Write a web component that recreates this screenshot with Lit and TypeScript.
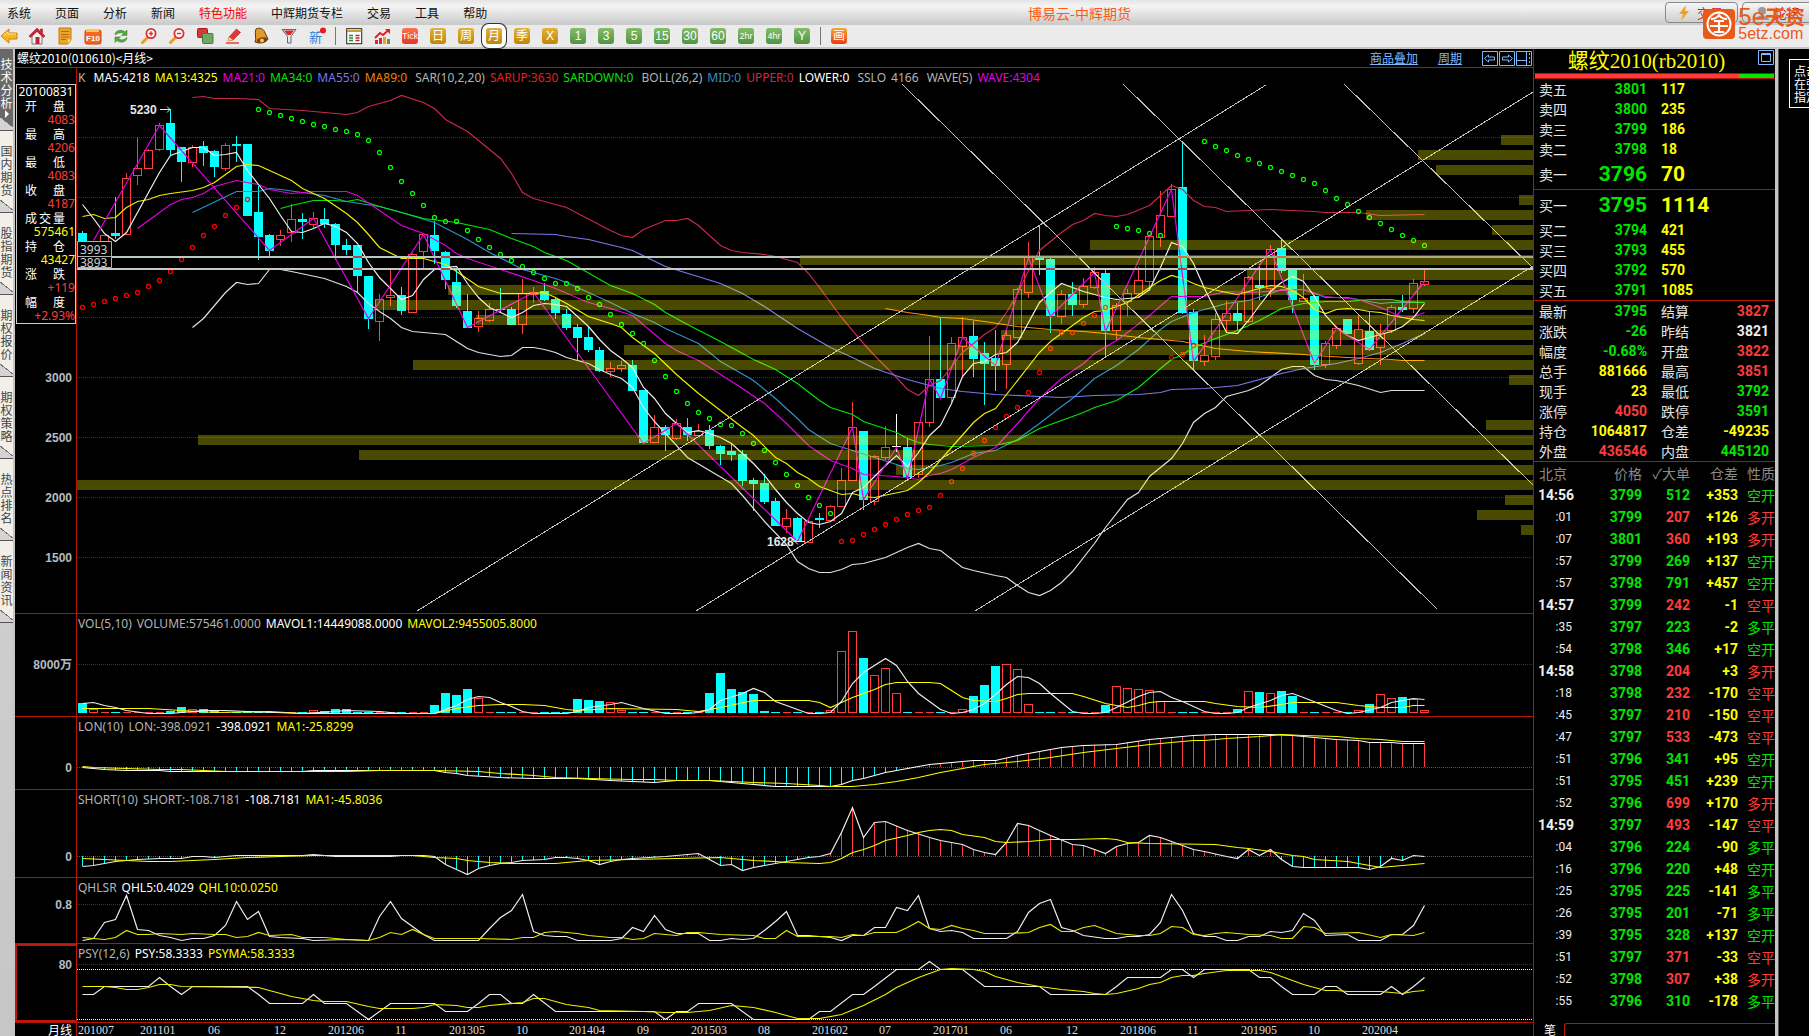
import { LitElement, html, svg, css, nothing, TemplateResult } from "lit";
import { customElement, state } from "lit/decorators.js";

/* ---------- chart data: month index, then canvas rows ---------- */

const STEP = 11;
const LEFT = 77;
const cx = (i: number) => 82 + STEP * i;

// high, low, body top, body bottom, kind (d = down, u = up, w = flat)
const CANDLES = `231,245,233,245,d 245,270,247,262,u 235,250,235,250,u 197,239,233,236,d 173,235,178,234,u 137,185,168,175,u
149,169,150,168,u 123,151,125,149,u 109,155,123,150,d 147,182,147,162,d 145,167,147,162,u 141,166,146,153,d 150,177,151,167,d
143,171,145,168,u 136,162,144,146,d 144,216,144,216,d 186,260,212,237,d 234,257,235,251,d 230,246,235,239,u 204,242,219,232,u
213,239,219,222,d 212,228,218,224,u 208,228,219,224,d 223,260,224,245,d 239,255,245,250,d 245,293,245,276,d 276,329,276,319,d
294,341,299,321,u 270,306,295,297,u 287,315,295,311,d 253,312,254,312,u 233,268,234,251,u 221,264,235,251,d 251,289,252,280,d
270,308,282,306,d 294,328,311,328,d 311,332,318,326,u 303,322,309,320,u 288,312,309,310,d 307,325,309,325,d 279,334,293,324,u
287,303,292,294,u 283,301,291,300,d 297,319,299,313,d 309,330,314,328,d 324,361,327,338,d 326,352,337,350,d 347,372,350,371,d
362,377,368,371,u 361,372,365,368,u 360,391,365,391,d 390,444,390,443,d 415,443,427,442,u 425,451,427,435,d 419,440,423,438,u
418,441,427,435,d 424,436,431,435,u 425,449,430,446,d 445,465,446,454,d 443,461,451,455,d 450,486,454,481,d 478,511,480,484,d
474,504,483,502,d 498,526,501,526,d 509,533,518,526,u 517,541,518,542,d 520,542,521,542,u 513,528,518,520,d 505,521,506,520,u
468,507,480,506,u 402,481,427,480,u 431,510,431,500,d 455,505,456,501,u 426,460,447,457,u 414,452,446,447,w 438,481,447,477,d
422,478,422,474,u 336,427,379,422,u 318,399,379,398,d 337,402,343,397,u 317,377,337,346,u 321,377,336,359,d 342,405,353,364,d
330,391,358,366,d 332,389,335,364,u 288,338,289,337,u 242,298,257,292,u 225,275,258,260,d 257,333,259,316,d 290,324,294,316,u
282,316,294,305,d 278,308,286,304,u 267,289,272,287,u 269,357,273,331,d 303,340,305,330,u 289,316,293,301,u 267,298,280,293,u
235,291,236,281,u 191,247,215,237,u 184,217,189,216,u 141,314,187,313,d 309,371,312,361,d 335,366,355,361,u 313,360,319,356,u
301,332,313,320,u 303,331,313,321,d 276,323,277,321,u 264,300,285,288,d 245,297,249,288,u 238,273,248,271,d 268,313,270,300,d
274,301,298,301,u 295,370,296,365,d 341,368,343,364,u 326,349,328,345,u 319,334,319,334,d 314,365,329,363,u 311,351,331,350,d
324,365,333,347,u 305,333,307,330,u 295,312,307,310,d 279,313,283,308,u 270,286,281,284,u`
  .split(/\s+/)
  .map((c) => {
    const [h, l, t, b, k] = c.split(",");
    return { h: +h, l: +l, t: +t, b: +b, k };
  });

type Pt = [number, number];
const pts = (s: string): Pt[] =>
  s.trim().split(/\s+/).map((p) => p.split(":").map(Number) as Pt);
const seq = (start: number, s: string): Pt[] =>
  s.trim().split(/[\s,]+/).map((v, k) => [start + k, +v] as Pt);

const MA5 = seq(0, `204,218,233,241,232,212,192,172,155,151,147,147,155,154,152,170,184,198,215,231,232,228,223,226,232,243,262,277,288,299,295,279,269,267,266,283,297,307,312,317,312,305,303,304,306,316,326,339,350,358,367,387,398,413,423,432,430,433,437,443,453,463,475,489,502,513,522,524,521,513,492,487,476,465,455,466,452,435,425,403,376,363,361,354,352,342,322,302,292,283,287,291,294,297,299,298,297,289,267,242,246,263,288,310,332,333,320,305,291,282,276,281,296,315,327,335,340,337,334,331,326,317,303`);
const MA13 = pts(`0:216 1:214 2:218 3:217 4:207 5:201 6:199 7:195 8:193 10:190 11:187 12:182 13:174 14:166 15:164 16:165 17:170 19:180 20:188 22:198 24:213 25:222 26:234 27:247 29:258 31:258 33:264 34:271 36:286 38:293 41:293 42:292 43:297 44:303 46:316 48:323 49:327 50:337 52:353 54:374 56:393 58:410 60:427 61:435 63:457 64:463 65:472 66:478 67:486 68:490 69:494 70:493 71:496 72:497 75:490 76:482 77:472 79:447 81:422 82:413 83:408 84:394 86:366 87:352 88:341 90:325 91:317 92:311 93:310 95:302 97:287 98:280 99:275 100:278 101:283 102:287 104:292 105:294 106:291 108:285 109:286 110:290 111:297 112:309 113:313 114:309 115:308 116:309 117:311 118:312 119:315 120:317 121:319 122:320`);
const MA21 = pts(`5:228 8:204 9:199 10:197 11:193 12:186 14:180 16:184 17:189 19:193 21:191 24:191 25:195 29:225 31:233 33:245 34:253 35:258 38:269 41:280 43:288 46:302 48:308 50:315 53:343 54:350 56:360 58:374 60:388 62:403 64:423 66:445 68:460 70:468 71:474 74:476 76:479 77:475 78:473 79:469 81:457 83:447 85:423 87:398 89:378 91:363 92:353 94:340 95:332 97:315 99:296 102:296 104:291 106:292 109:290 111:289 113:296 116:299 118:307 119:312 120:317 121:316 122:312`);
const MID = pts(`10:212 14:191 16:191 17:188 18:189 22:195 24:201 27:206 29:212 32:222 35:239 37:252 39:263 40:269 43:278 44:282 46:292 48:302 50:313 52:322 53:328 55:338 56:343 58:361 61:380 63:398 65:418 66:429 68:443 70:450 72:457 74:464 75:468 76:469 78:465 79:462 81:453 83:450 85:439 87:423 89:406 90:398 92:378 94:365 96:349 98:329 99:321 101:312 104:303 106:300 108:293 109:289 111:289 113:297 115:297 117:301 118:303 119:302 122:302`);
const MA34 = pts(`18:208 19:205 21:200 23:200 24:201 25:199 27:206 30:215 31:218 34:222 37:229 39:238 41:246 42:252 44:260 48:285 50:293 52:304 53:312 55:324 58:341 59:347 61:359 63:369 65:383 67:400 68:407 70:414 71:421 74:432 75:438 76:442 77:444 79:446 83:445 85:440 87:428 89:420 91:412 92:407 94:400 96:387 98:368 99:359 100:354 101:347 103:338 105:330 107:320 109:308 111:303 113:301 115:301 117:299 119:299 120:301 122:302`);
const MA55 = pts(`39:233 43:234 44:236 46:239 49:247 50:250 53:266 58:283 60:293 62:306 65:328 68:347 70:357 72:368 75:379 77:385 78:388 80:391 83:394 87:396 89:397 92:395 96:394 98:392 99:389 102:388 105:385 109:373 111:368 114:363 116:358 118:352 120:343 122:333`);
const MA89 = pts(`73:308 75:312 77:315 78:317 80:318 82:321 85:326 88:329 91:331 93:333 96:337 99:340 100:341 103:348 106:351 111:354 112:355 115:357 119:359 120:360 122:360`);
const UPPER = pts(`10:97 11:96 12:98 14:98 16:99 17:108 20:110 24:114 25:112 26:106 28:100 29:95 31:102 32:108 33:119 35:131 37:149 38:158 39:173 40:192 41:198 42:201 43:204 44:207 48:230 49:235 50:237 51:229 53:220 54:220 55:218 56:225 58:245 59:250 60:252 62:254 63:256 65:262 66:273 67:287 68:302 69:317 71:343 72:355 74:377 75:389 76:395 77:385 78:380 80:352 82:334 83:327 84:312 85:293 86:270 87:250 89:232 90:224 91:220 92:213 93:215 94:216 95:214 97:205 98:195 99:185 100:189 101:200 102:206 103:207 104:211 108:209 110:210 112:211 113:212 116:212 118:215 122:214`);
const LOWER = pts(`10:327 11:318 13:292 14:282 15:284 16:283 17:269 18:269 19:271 22:278 23:282 24:286 25:292 26:303 27:311 28:318 29:327 30:331 33:334 34:341 35:348 36:352 38:356 39:355 40:347 41:347 42:349 43:352 44:357 46:363 47:369 48:374 49:378 50:387 51:407 52:421 53:433 55:457 57:470 59:483 60:495 62:521 64:544 65:561 66:568 67:572 68:572 69:569 70:564 71:563 73:557 75:547 76:543 77:548 78:550 80:567 81:570 83:575 84:577 85:585 86:592 87:595 88:590 89:582 90:571 92:543 93:527 95:499 96:492 97:476 99:458 100:443 101:422 102:413 103:407 104:396 105:393 106:390 107:385 109:369 110:366 111:366 112:375 113:379 114:380 116:385 118:392 119:390 122:390`);
const WAVE = pts(`1:240 7:125 17:250 21:218 26:318 31:234 35:327 41:292 51:443 54:423 65:541 70:427 71:499 74:447 75:478 77:379 78:398 80:337 83:365 86:257 88:316 92:272 93:331 99:189 101:361 108:249 112:363 114:328 117:349 122:281`);

const SAR: { c: string; p: Pt[] }[] = [
  { c: "#f00", p: seq(0, "307,304,301,298,295,292,286,280,271,259,247,235,226,215,207,199") },
  { c: "#0f0", p: seq(16, "109,112,115,118,121,124,126,129,131,134,140,152,167,181,193,205,217,221,221,230,239,247,254,260,266,272,278,283,283,288,297,304,314,324,333,343,360,376,391,403,412,418,424,425,433,443,450,462,474,485,497,505,513") },
  { c: "#f00", p: seq(69, "541,540,534,529,524,519,514,510,507,495,481,468,453,440,427,416,407,392,372,348,332,332,323,315,307") },
  { c: "#0f0", p: seq(94, "226,228,230,233,235") },
  { c: "#f00", p: seq(99, "357,354,345") },
  { c: "#0f0", p: seq(102, "141,146,150,155,159,163,167,171,175,179,183,190,198,204,211,217,223,229,235,240,245") },
];

// volume-at-price bars: row, length measured from the right edge
const PROFILE: Pt[] = [
  [135, 32], [150, 115], [165, 97], [195, 14], [210, 167], [225, 41], [240, 443], [255, 733], [270, 286], [285, 1085],
  [300, 1158], [315, 1057], [330, 532], [345, 909], [360, 1120], [375, 24], [420, 47], [435, 1335], [450, 1174],
  [465, 637], [480, 1456], [495, 28], [510, 56], [525, 12],
];

const TRENDS = [
  [902, 84, 1437, 609], [1123, 84, 1533, 485], [1344, 84, 1533, 268],
  [417, 611, 1266, 85], [696, 611, 1533, 92], [975, 611, 1533, 266],
];

const VOLUME = `703,709,712,712,712,712,712,712,711,707,709,709,711,712,712,711,712,712,712,712,712,710,711,709,709,712,712,712,712,712,712,712,705,693,695,689,698,712,712,712,712,712,712,712,712,699,700,701,702,710,712,712,712,712,712,712,711,693,673,689,692,694,711,712,712,712,712,712,710,651,631,658,675,668,693,712,712,712,712,712,709,696,685,666,664,669,704,712,712,712,712,712,712,705,686,688,689,690,701,712,712,712,712,712,712,709,691,692,693,691,696,712,712,712,712,712,710,704,694,698,697,699,710`
  .split(",")
  .map(Number);
const VOL5 = pts(`0:703 1:702 2:705 3:707 4:710 6:713 8:713 9:712 11:710 13:710 15:711 20:713 23:711 24:710 27:711 29:713 32:713 34:705 35:699 36:696 37:697 38:702 39:706 40:711 41:713 44:713 45:711 46:707 48:704 49:702 51:708 53:713 55:713 56:712 57:709 58:700 60:693 61:688 62:692 63:701 65:709 66:713 67:713 68:712 69:701 70:683 71:672 73:658 74:665 75:681 76:693 77:701 78:709 79:713 80:712 81:709 82:703 83:694 84:684 85:676 86:677 87:683 88:693 90:711 91:713 92:713 93:712 94:707 96:696 97:692 98:691 99:697 100:701 102:711 103:713 104:713 105:712 106:707 108:700 109:695 110:693 111:697 114:710 115:713 116:712 118:707 119:702 120:700 121:698 122:699`);
const VOL10 = pts(`0:708 6:708 9:710 12:712 17:711 20:713 32:713 34:708 36:705 38:704 40:704 42:705 44:709 45:710 48:708 54:709 56:711 57:709 58:707 61:700 66:700 67:702 68:707 69:702 70:697 72:689 73:684 74:682 77:682 78:683 79:690 80:697 81:700 83:701 84:698 85:694 86:693 90:693 91:696 93:703 95:707 96:705 97:702 98:701 102:701 103:703 105:706 107:707 109:704 110:702 114:702 116:705 118:707 120:707 121:705 122:705`);

const LON = pts(`0:767 2:769 4:770 7:770 8:771 20:771 21:770 32:770 33:772 34:773 35:775 38:777 41:778 45:778 48:780 52:782 54:780 57:780 60:783 63:786 68:786 69:784 70:780 71:778 73:772 75:768 77:764 81:760 83:760 85:755 89:747 91:745 94:744 97:739 101:735 103:734 108:734 110:735 112:737 114:739 116:740 117:742 119:742 120:743 122:743`);
const LON_MA = pts(`0:766 1:767 4:768 7:769 9:769 13:771 24:771 27:770 32:770 36:771 38:773 41:775 43:777 46:778 50:779 52:779 54:780 57:780 61:782 64:783 67:785 68:786 70:786 72:784 74:781 76:777 78:772 80:768 82:764 85:761 88:757 91:752 94:748 97:744 101:740 102:740 104:738 107:736 109:734 111:735 114:736 116:738 118:739 120:741 122:741`);
const SHORT = pts(`0:866 1:865 3:861 5:859 7:858 9:858 10:856 11:856 12:857 14:855 20:855 21:854 23:856 28:856 29:855 31:855 32:856 33:864 34:869 35:874 36:868 37:865 38:863 39:862 40:860 42:859 43:857 44:857 45:858 46:860 47:864 48:861 49:859 50:858 53:856 55:854 56:853 57:859 58:865 59:864 60:870 61:867 62:865 64:861 66:857 67:856 68:853 69:832 70:807 71:837 72:822 73:821 75:830 77:837 78:840 80:844 81:849 82:852 83:854 84:842 85:823 86:825 88:835 90:844 91:845 92:849 93:853 94:846 95:843 96:842 97:835 98:837 99:841 101:849 102:851 104:856 105:858 106:849 107:855 108:849 109:859 110:866 111:867 116:867 117:869 118:866 119:858 120:860 121:855 122:856`);
const SHORT_MA = pts(`0:858 2:859 4:860 6:861 8:861 10:860 12:859 15:857 18:856 21:855 30:855 32:857 34:858 35:860 37:862 39:863 43:863 44:862 46:860 50:859 54:858 58:857 59:858 61:860 63:861 64:862 67:863 68:862 69:858 70:852 71:849 72:845 73:840 75:835 76:832 77:830 78:829 79:830 80:834 82:837 83:841 84:842 86:841 88:839 90:839 93:838 94:839 95:842 97:843 103:844 105:847 106:848 108:851 109:853 110:855 111:856 112:859 115:861 117:865 118:867 120:865 122:863`);
const QHL5 = pts(`0:940 1:938 2:922 3:919 4:895 5:929 6:930 7:935 8:937 9:940 10:938 11:938 12:935 13:925 14:901 15:919 16:911 17:936 18:937 20:938 21:940 24:939 26:940 27:916 28:901 29:918 31:934 32:940 36:940 37:928 38:917 39:910 40:894 41:931 42:935 43:936 44:936 45:940 48:940 49:938 50:927 51:931 52:915 53:929 54:933 56:933 57:940 58:940 59:938 60:939 61:938 62:930 63:921 64:911 65:935 66:935 68:937 69:940 70:935 71:935 72:927 73:927 74:907 75:910 76:895 77:928 78:931 79:930 80:932 81:938 84:938 85:931 86:912 87:903 88:899 89:927 90:930 91:935 93:938 94:938 95:936 96:936 97:934 98:922 99:894 100:910 101:933 102:936 103:936 104:940 105:940 106:936 107:936 108:931 109:932 110:930 111:913 112:920 113:935 115:934 116:940 118:940 119:934 120:934 121:925 122:905`);
const QHL10 = pts(`0:937 1:938 2:939 3:937 4:930 5:934 6:934 7:933 9:934 10:933 12:934 13:934 14:937 15:936 16:932 17:935 19:934 20:937 22:937 24:939 26:940 27:937 28:932 29:934 30:929 31:934 32:938 36:938 39:939 40:937 41:937 42:932 43:931 44:932 45:933 46:935 48:937 49:937 50:939 51:938 52:933 54:935 55:932 56:932 58:934 61:935 62:938 63:938 64:930 65:936 68:936 69:937 70:934 71:935 72:932 74:932 75:927 76:921 77:928 78:929 79:925 80:928 81:930 82:933 84:933 86:932 87:927 88:924 89:931 90:931 91:927 92:925 93:929 94:933 96:935 97:935 98:933 99:926 100:927 101:934 102:935 103:933 104:932 106:934 108:935 109:938 110:938 111:926 112:927 113:933 116:932 118:937 119:934 121:935 122:932`);
const PSY = pts(`0:994 1:994 2:986 6:986 7:977 8:986 9:994 10:986 15:986 16:994 17:1003 20:1003 21:994 22:1003 24:1003 26:1019 28:1003 32:1003 33:1011 35:1011 36:1003 37:994 38:994 39:1003 40:1003 41:994 43:1011 52:1011 53:1019 54:1011 55:1011 56:1003 59:1003 61:1019 66:1019 67:1011 68:1011 70:994 71:994 72:986 74:969 76:969 77:961 78:969 80:969 82:986 87:986 88:994 93:994 94:986 95:977 98:977 99:969 100:969 101:977 102:969 106:969 107:977 108:977 109:986 110:994 112:994 113:986 114:986 115:994 118:994 119:986 120:994 121:986 122:977`);
const PSYMA = pts(`0:986 2:986 3:987 4:989 5:989 6:987 7:984 8:984 9:986 16:987 17:990 19:996 21:1000 22:1001 24:1001 26:1006 27:1008 30:1008 31:1007 32:1004 34:1005 35:1007 36:1007 37:1005 40:1002 41:998 42:998 44:1004 46:1007 47:1010 51:1011 53:1012 55:1012 57:1010 59:1005 61:1007 63:1012 64:1015 65:1018 67:1018 69:1014 71:1005 73:994 74:987 76:977 78:969 79:968 81:969 82:971 83:976 85:982 87:986 89:989 91:991 92:993 93:994 94:993 96:988 97:984 98:982 99:977 100:975 101:975 102:973 104:970 107:970 108:972 109:976 111:984 112:987 113:990 114:990 115:991 118:991 120:993 121:991 122:990`);

const DATES: [number, string][] = [
  [78, "201007"], [140, "201101"], [208, "06"], [274, "12"], [328, "201206"], [395, "11"], [449, "201305"], [516, "10"],
  [569, "201404"], [637, "09"], [691, "201503"], [758, "08"], [812, "201602"], [879, "07"], [933, "201701"], [1000, "06"],
  [1066, "12"], [1120, "201806"], [1187, "11"], [1241, "201905"], [1308, "10"], [1362, "202004"],
];

/* ---------- quote data ---------- */

const ASKS = [["卖五", 3801, 117], ["卖四", 3800, 235], ["卖三", 3799, 186], ["卖二", 3798, 18], ["卖一", 3796, 70]];
const BIDS = [["买一", 3795, 1114], ["买二", 3794, 421], ["买三", 3793, 455], ["买四", 3792, 570], ["买五", 3791, 1085]];
const STATS = [
  ["最新", "3795", "g", "结算", "3827", "r"],
  ["涨跌", "-26", "g", "昨结", "3821", "w"],
  ["幅度", "-0.68%", "g", "开盘", "3822", "r"],
  ["总手", "881666", "y", "最高", "3851", "r"],
  ["现手", "23", "y", "最低", "3792", "g"],
  ["涨停", "4050", "r", "跌停", "3591", "g"],
  ["持仓", "1064817", "y", "仓差", "-49235", "y"],
  ["外盘", "436546", "r", "内盘", "445120", "g"],
];
const TICKS = `14:56 3799 512 +353 空开 g|:01 3799 207 +126 多开 r|:07 3801 360 +193 多开 r|:57 3799 269 +137 空开 g|:57 3798 791 +457 空开 g|14:57 3799 242 -1 空平 r|:35 3797 223 -2 多平 g|:54 3798 346 +17 空开 g|14:58 3798 204 +3 多开 r|:18 3798 232 -170 空平 r|:45 3797 210 -150 空平 r|:47 3797 533 -473 空平 r|:51 3796 341 +95 空开 g|:51 3795 451 +239 空开 g|:52 3796 699 +170 多开 r|14:59 3797 493 -147 空平 r|:04 3796 224 -90 多平 g|:16 3796 220 +48 空开 g|:25 3795 225 -141 多平 g|:26 3795 201 -71 多平 g|:39 3795 328 +137 空开 g|:51 3797 371 -33 空平 r|:52 3798 307 +38 多开 r|:55 3796 310 -178 多平 g`
  .split("|")
  .map((r) => r.split(" "));

const CURSOR = [
  ["开盘", "4083", "r"], ["最高", "4206", "r"], ["最低", "4083", "r"], ["收盘", "4187", "r"],
  ["成交量", "575461", "y"], ["持仓", "43427", "y"], ["涨跌", "+119", "r"], ["幅度", "+2.93%", "r"],
];

const MENU = ["系统", "页面", "分析", "新闻", "特色功能", "中辉期货专栏", "交易", "工具", "帮助"];
const SIDE = ["技术分析", "国内期货", "股指期货", "期权报价", "期权策略", "热点排名", "新闻资讯"];

type Tag = [string, string];
const GREY = "#b4b4b4";

/* ---------- icons ---------- */

const ICONS: [string, TemplateResult][] = [
  ["后退", svg`<path d="M0 8 8 1V5h8v6H8v4z" fill="#f9b520" stroke="#c98410" stroke-width="1"/><path d="M3 7.500 7 4v2h8" stroke="#ffe28a" fill="none"/>`],
  ["首页", svg`<path d="M3 8v8h10V8L8 3z" fill="#f2f2f2" stroke="#777"/><path d="M8 0 0 8l1.500 1.500L8 3.500l6.500 6L16 8l-2.500-2.500V1h-2v2.500z" fill="#d8202c" stroke="#900f18" stroke-width=".5"/><rect x="6.500" y="9" width="4" height="7" fill="#c3222c"/>`],
  ["公告", svg`<path d="M2 0h12v12l-3 4H2z" fill="#eea62a" stroke="#c27c10"/><path d="M4 3.500h8M4 6.500h8M4 9h8M4 11.500h5" stroke="#b06a08"/><path d="M14 11.500h-3v4z" fill="#ffdf93"/>`],
  ["F10", svg`<rect x="0" y="2" width="16" height="14" rx="2" fill="#f5661e" stroke="#ca4300"/><path d="M1 1h13v3H1z" fill="#f8c25e"/><text x="8" y="13" font-size="8" font-weight="700" text-anchor="middle" fill="#fff" font-family="Liberation Sans">F10</text>`],
  ["刷新", svg`<path d="M2 7c0-5 7-6 10-3l2-2v5.500H8.500l2-1.800C8 4 5 5 2 7z" fill="#54ab3a" stroke="#377b22" stroke-width=".5"/><path d="M14 9.500c0 5-7 6-10 3l-2 2V9h5.500l-2 1.800C8 12.500 11 12 14 9.500z" fill="#54ab3a" stroke="#377b22" stroke-width=".5"/>`],
  ["放大", svg`<path d="M7 9 1.500 14.500" stroke="#f19a1c" stroke-width="3" stroke-linecap="round"/><circle cx="10" cy="5.500" r="4.600" fill="#fff" stroke="#dc3030" stroke-width="1.800"/><path d="M7.800 5.500h4.400M10 3.300v4.400" stroke="#dc3030" stroke-width="1.500"/>`],
  ["缩小", svg`<path d="M7 9 1.500 14.500" stroke="#f19a1c" stroke-width="3" stroke-linecap="round"/><circle cx="10" cy="5.500" r="4.600" fill="#fff" stroke="#dc3030" stroke-width="1.800"/><path d="M7.800 5.500h4.400" stroke="#dc3030" stroke-width="1.500"/>`],
  ["叠加", svg`<rect x=".5" y=".5" width="10" height="9" rx="1" fill="#d73737" stroke="#a31d1d"/><rect x="5.500" y="5.500" width="10.500" height="10" rx="1" fill="#6fa864" stroke="#477a3e"/>`],
  ["画线", svg`<path d="m4 9 7.500-8 4 3.500L8 12l-5 1z" fill="#e3372f" stroke="#a9201a" stroke-width=".6"/><path d="m4 9-1 4 5-1z" fill="#f8d79a"/><path d="M1 15h13" stroke="#e04c3c" stroke-width="1.600"/>`],
  ["预警", svg`<path d="M3 1c4-2 8 0 9 4l3 6c-2 4-8 5-13 3 2-3-1-9 1-13z" fill="#e39a2c" stroke="#5f3605" stroke-width="1"/><ellipse cx="9" cy="12" rx="5.500" ry="2.500" transform="rotate(-12 9 12)" fill="#7a4108"/><circle cx="9" cy="12.500" r="2" fill="#f6c25b"/>`],
  ["筛选", svg`<path d="M1 1.500h14L10 8.500V15H6.500V8.500z" fill="#e8e8e8" stroke="#666"/><path d="M3 2.500h10L9.500 7h-3z" fill="#e02626"/>`],
  ["新", svg`<text x="6.500" y="14" font-size="13" text-anchor="middle" fill="#2d7fd6" font-family="Noto Sans CJK SC">新</text><circle cx="14" cy="2.500" r="3" fill="#f01818"/>`],
  ["|", svg``],
  ["报价表", svg`<rect x=".7" y=".7" width="15" height="15" fill="#fff" stroke="#222"/><path d="M1 3h14.400" stroke="#c8a030" stroke-width="2"/><path d="M3 7.500h4M3 10h4M3 12.500h4" stroke="#209030" stroke-width="1.300"/><path d="M9.500 7.500h4M9.500 10h4M9.500 12.500h4" stroke="#c02020" stroke-width="1.300"/>`],
  ["走势图", svg`<path d="M1 16v-4h3v4zM5 16v-6h3v6z" fill="#e02828"/><path d="M9 16V9h3v7z" fill="#f0a020"/><path d="M13 16v-5h3v5z" fill="#48a038"/><path d="M1 10 6 5l3 2 5.500-5" stroke="#e01c1c" stroke-width="1.800" fill="none"/><path d="M11 1h5v5z" fill="#e01c1c"/>`],
];
const PERIODS: [string, string][] = [
  ["Tick", "red"], ["日", "gold"], ["周", "gold"], ["月", "gold"], ["季", "gold"], ["X", "gold"],
  ["1", "green"], ["3", "green"], ["5", "green"], ["15", "green"], ["30", "green"], ["60", "green"],
  ["2hr", "green"], ["4hr", "green"], ["Y", "green"], ["|", ""], ["画", "orange"],
];

/* ---------- drawing helpers ---------- */

const line = (p: Pt[], color: string) =>
  svg`<polyline fill="none" stroke=${color} stroke-width="1.200" points=${p.map(([i, y]) => `${cx(i) + 0.5},${y + 0.5}`).join(" ")}></polyline>`;

const grid = (y: number, color = "#b00000") =>
  svg`<line x1="77" x2="9999" y1=${y + 0.5} y2=${y + 0.5} stroke=${color} stroke-dasharray="1 1" shape-rendering="crispEdges"></line>`;

const valueAt = (p: Pt[], i: number) => {
  const k = p.findIndex(([n]) => n >= i);
  if (p[k][0] === i) return p[k][1];
  const [a, b] = [p[k - 1], p[k]];
  return a[1] + ((b[1] - a[1]) * (i - a[0])) / (b[0] - a[0]);
};

const sticks = (p: Pt[], zero: number) =>
  CANDLES.map((_, i) => {
    const y = Math.round(valueAt(p, i));
    if (y === zero) return nothing;
    return svg`<rect x=${cx(i)} y=${Math.min(y, zero)} width="1" height=${Math.abs(y - zero)} fill=${y > zero ? "#0ff" : "#ff3c3c"}></rect>`;
  });

@customElement("app-root")
export class AppRoot extends LitElement {
  static styles = css`
    :host {
      display: grid;
      grid-template-rows: 25px 24px 1fr;
      min-height: 100vh;
      background: #000;
      color: #fff;
      overflow: hidden;
      font: 12px/14px "Noto Sans", "Noto Sans CJK SC", sans-serif;
    }
    button, a { font: inherit; color: inherit; background: none; border: 0; padding: 0; margin: 0; text-decoration: none; cursor: pointer; }
    svg { display: block; }
    .r { color: #ff3c3c; }
    .g { color: #00e600; }
    .y { color: #ff0; }
    .w { color: #eee; }

    .menu { display: grid; grid-template-columns: 1fr auto 1fr; align-items: center; background: linear-gradient(#e4e4e4, #f4f4f4 25%, #c9c9c9); color: #111; font-family: "Noto Sans CJK SC", sans-serif; }
    .items { display: flex; gap: 24px; padding-left: 7px; white-space: nowrap; }
    .hot { color: #f00; }
    .name { color: #ff5a14; font-size: 14px; padding-left: 350px; }
    .actions { display: flex; justify-content: flex-end; gap: 4px; height: 21px; margin-right: -6px; }
    .action { display: flex; align-items: center; justify-content: space-between; width: 73px; box-sizing: border-box; padding: 0 14px 0 12px; border: 1px solid #888; border-radius: 4px; background: linear-gradient(#f6f6f6, #cfcfcf); color: #d01818; font-size: 13px; }

    .tools { display: flex; align-items: center; gap: 12px; padding-left: 1px; background: #ebebeb; border-bottom: 2px solid #c8c4c4; }
    .tool { width: 16px; height: 16px; flex: none; overflow: visible; }
    .tool svg { overflow: visible; }
    .sep { width: 1px; height: 18px; background: #777; margin: 0 -2px; }
    .period { display: grid; place-items: center; border-radius: 3px; color: #fff; font: 12px/16px "Liberation Sans", "Noto Sans CJK SC", sans-serif; white-space: nowrap; }
    .small { font-size: 9px; }
    .gold { background: linear-gradient(#e3b23c, #bf8606); }
    .green { background: linear-gradient(#84bd6c, #4f9440); }
    .red { background: linear-gradient(#ff7350, #e63420); }
    .orange { background: linear-gradient(#f9a52c, #ec3c14); }
    .on { box-shadow: 0 0 0 4px #fff, 0 0 0 5px #333; }

    .brand { position: absolute; top: 7px; right: 4px; display: flex; gap: 3px; align-items: center; color: #e8591a; }
    .brand-name { display: flex; align-items: baseline; font: 24px/20px "Liberation Sans", sans-serif; }
    .brand-name b { font: 700 20px/20px "Noto Sans CJK SC", sans-serif; }
    .brand-url { font: 16px/14px "Liberation Sans", sans-serif; }

    .body { display: grid; grid-template-columns: 13px 1fr 242px 34px; min-height: 0; }
    .side { background: linear-gradient(#d8d8d8, #c6c6c6); border-right: 2px solid #c8c4c4; box-sizing: content-box; overflow: hidden; margin-right: -2px; z-index: 1; }
    .tab { display: grid; justify-items: center; align-content: center; position: relative; width: 13px; height: 82px; box-sizing: border-box; padding-bottom: 4px; color: #444; background: linear-gradient(38deg, #d4d4d4 9px, #777 9px, #777 10px, #f1efe7 10px); border-bottom: 1px solid #555; font: 12px/13px "Noto Sans CJK SC", sans-serif; }
    .tab span { display: block; width: 13px; }
    .tab.cur { color: #fff; background: linear-gradient(38deg, #d4d4d4 9px, #ccc 9px, #ccc 10px, #686868 10px); }

    .chart { display: flex; flex-direction: column; min-width: 0; margin-left: 2px; }
    .head { display: flex; align-items: center; gap: 20px; height: 18px; padding-left: 2px; border-bottom: 1px solid #b41400; font-family: "Noto Sans CJK SC", sans-serif; }
    .head span { margin-right: auto; }
    .head a { color: #7db9ff; text-decoration: underline; }
    .navs { display: flex; gap: 1px; padding-right: 1px; }
    .pane { display: grid; grid-template-columns: 62px 1fr; border-bottom: 1px solid #b41400; flex: none; }
    .pane.fill { flex: 1; }
    .axis { border-right: 1px solid #b41400; position: relative; overflow: hidden; }
    .axis.sel { border: 2px solid #c01808; border-right-width: 1px; margin: 0; }
    .plot { display: grid; min-width: 0; overflow: hidden; }
    .plot > * { grid-area: 1 / 1; }
    .plot svg { width: 100%; height: 100%; min-width: 0; overflow: hidden; }
    .legend { z-index: 1; display: flex; gap: 5px; padding: 3px 0 0 1px; white-space: nowrap; align-self: start; }
    .foot { display: grid; grid-template-columns: 62px 1fr; height: 14px; flex: none; }
    .foot .axis { text-align: right; padding-right: 4px; font: 12px/14px "Noto Sans CJK SC", sans-serif; overflow: visible; }
    .axis text { font: 700 12px "Liberation Sans", "Noto Sans CJK SC", sans-serif; fill: #b4bcc4; text-anchor: end; }
    .dates text { font: 12px "Liberation Serif", serif; fill: #ddd; }

    .info { position: absolute; left: 1px; top: 16px; width: 60px; box-sizing: border-box; border: 1px solid #ccc; background: #000; line-height: 14px; }
    .info dl, .info dt, .info dd { margin: 0; }
    .info p { margin: 0; text-align: center; }
    .info dt { display: flex; justify-content: space-between; padding: 0 10px 0 8px; font-family: "Noto Sans CJK SC", sans-serif; }
    .info dd { text-align: right; }

    .quote { border-left: 1px solid #b41400; font: 14px/20px "Noto Sans CJK SC", sans-serif; display: flex; flex-direction: column; }
    .title { position: relative; text-align: center; font: 21px/24px "Liberation Serif", "Noto Sans CJK SC", serif; color: #ff0; padding-right: 16px; height: 24px; }
    .title button { position: absolute; right: 1px; top: 1px; }
    .ratio { display: flex; height: 4px; border: 1px solid #b41400; border-width: 1px 0; padding: 0 1px; }
    .ratio i:first-child { background: #ff3c3c; flex: 203; }
    .ratio i:last-child { background: #00e600; flex: 35; }
    table { border-collapse: separate; border-spacing: 0; table-layout: fixed; width: 100%; }
    td, th { padding: 0; font-weight: 400; text-align: right; white-space: nowrap; vertical-align: middle; }
    .quote th { text-align: left; padding-left: 5px; color: #e4e4e4; }
    .book tr, .stats tr { height: 20px; }
    .book td, .stats td, .ticks td { font: 700 14px/20px Roboto, sans-serif; }
    .book td:last-child { text-align: left; padding-left: 14px; }
    .book .big { height: 30px; }
    .book .big td { font-size: 21px; }
    .book { border-bottom: 1px solid #b41400; }
    .stats { border-bottom: 1px solid #b41400; }
    .stats th + td + th { padding-left: 14px; }
    .stats td:last-child { padding-right: 6px; }
    .c-l { width: 40px; } .c-p { width: 73px; } .c-m { width: 54px; }
    .c-time { width: 40px; } .c-price { width: 68px; } .c-vol { width: 48px; } .c-diff { width: 48px; }
    .ticks tr { height: 22px; }
    .ticks thead th { color: #8a8a8a; text-align: right; padding: 0; }
    .ticks thead th:first-child { text-align: left; padding-left: 5px; }
    .ticks .kind { font: 14px/20px "Noto Sans CJK SC", sans-serif; padding-right: 0; }
    .ticks .sec { font: 12px/20px Roboto, sans-serif; color: #ddd; padding-right: 2px; }
    .ticks td:first-child { color: #eee; }
    .bottom { display: flex; margin-top: auto; height: 14px; padding-left: 10px; gap: 8px; font-size: 12px; line-height: 14px; }
    .bottom i { flex: 1; border: 1px solid #c01400; border-width: 1px 0 0 1px; border-radius: 3px 0 0 0; }

    .strip { border-left: 3px solid #c8c4c4; box-shadow: inset 1px 0 0 #555; overflow: hidden; }
    .tip { margin: 10px 0 0 11px; border: 1px solid #fff; padding: 4px; width: 60px; box-sizing: border-box; font: 12px/13px "Noto Sans CJK SC", sans-serif; height: 49px; overflow: hidden; }
  `;

  @state() private period = "月";

  private legend(tags: Tag[]) {
    return html`<div class="legend">${tags.map(([c, t]) => html`<span style="color:${c};white-space:pre">${t}</span>`)}</div>`;
  }

  private pane(top: number, height: number, ticks: [number, string][], tags: Tag[], body: unknown, selected = false) {
    return html`
      <section class="pane" style="height:${height}px">
        <div class="axis ${selected ? "sel" : ""}">
          <svg width="58" height=${height}>
            ${ticks.map(([y, t]) => svg`<text x=${selected ? 55 : 57} y=${y - top + (selected ? 3 : 5)}>${t}</text>`)}
          </svg>
        </div>
        <div class="plot">
          ${this.legend(tags)}
          <svg><g transform="translate(${-LEFT},${-top})">${body}</g></svg>
        </div>
      </section>`;
  }

  private candles() {
    return svg`<g shape-rendering="crispEdges">${CANDLES.map(({ h, l, t, b, k }, i) => {
      const x = cx(i);
      if (k === "w")
        return svg`<rect x=${x} y=${h} width="1" height=${l - h} fill="#fff"></rect><rect x=${x - 4} y=${t} width="9" height="1" fill="#fff"></rect>`;
      if (k === "d")
        return svg`<rect x=${x} y=${h} width="1" height=${l - h} fill="#0ff"></rect><rect x=${x - 4} y=${t} width="9" height=${Math.max(1, b - t)} fill="#0ff"></rect>`;
      return svg`<path d="M${x + 0.5} ${h}V${t}M${x + 0.5} ${b}V${l}M${x - 3.5} ${t + 0.5}h8V${b + 0.5}h-8z" fill="none" stroke="#ff3c3c"></path>`;
    })}</g>`;
  }

  private level(y: number) {
    return CANDLES.map((c, i) =>
      c.k === "d" && c.t < y - 2 && c.b > y + 2 ? svg`<rect x=${cx(i) - 4} y=${y - 1} width="9" height="2" fill="#c04040"></rect>` : nothing
    );
  }

  private mainPlot() {
    return svg`
      ${[137, 197, 317, 377, 437, 497, 557].map((y) => grid(y))}
      ${this.candles()}
      ${line(UPPER, "#c8284a")}${line(LOWER, "#e0e0e0")}${line(MID, "#2e90c8")}
      ${line(MA89, "#ff8c00")}${line(MA55, "#7878f0")}${line(MA34, "#00e600")}
      ${line(MA21, "#e000e0")}${line(MA13, "#f0f000")}${line(MA5, "#f0f0f0")}${line(WAVE, "#e000e0")}
      ${SAR.map((s) => s.p.map(([i, y]) => svg`<ellipse cx=${cx(i) + 0.5} cy=${y + 0.5} rx="2" ry="2.200" fill="none" stroke=${s.c} stroke-width="1.200"></ellipse>`))}
      ${TRENDS.map(([a, b, c, d]) => svg`<line x1=${a} y1=${b} x2=${c} y2=${d} stroke="#c0c0c0" shape-rendering="crispEdges"></line>`)}
      <rect x="77" y="256" width="9999" height="2" fill="#b8c8c4"></rect>
      <rect x="800" y="256" width="9999" height="2" fill="#8888b8"></rect>
      <rect x="77" y="268" width="9999" height="2" fill="#c8c8c8"></rect>
      ${this.level(257)}${this.level(269)}
      <g font-family="Noto Sans" font-size="12" fill="#c8d0d4">
        <path d="M77.500 241.500h34v26h-34zM77.500 256.500h34" fill="#000" stroke="#b0b0b0"></path>
        <text x="80" y="254">3993</text><text x="80" y="267">3893</text>
      </g>
      <g font-family="Liberation Sans" font-size="12" font-weight="700" fill="#e8e8e8">
        <text x="130" y="114">5230</text><text x="767" y="546">1628</text>
      </g>
      <path d="M160 109.500h10M167 106.500l3 3-3 3M795 541.500h10M798 538.500l-3 3 3 3" fill="none" stroke="#e8e8e8"></path>`;
  }

  private volumePlot() {
    return svg`
      ${grid(664)}
      <g shape-rendering="crispEdges">${VOLUME.map((y, i) => {
        const x = cx(i);
        return CANDLES[i].k === "d"
          ? svg`<rect x=${x - 4} y=${y} width="9" height=${713 - y} fill="#0ff"></rect>`
          : svg`<path d="M${x - 3.5} ${y + 0.5}h8V712.500h-8z" fill="none" stroke="#ff3c3c"></path>`;
      })}</g>
      ${line(VOL10, "#ff0")}${line(VOL5, "#eee")}`;
  }

  private mainPane() {
    const tags: Tag[] = [
      [GREY, "K "], ["#fff", "MA5:4218"], ["#ff0", "MA13:4325"], ["#e000e0", "MA21:0"], ["#00e600", "MA34:0"], ["#7878f0", "MA55:0"],
      ["#f08000", "MA89:0 "], [GREY, "SAR(10,2,20)"], ["#e02020", "SARUP:3630"], ["#00e600", "SARDOWN:0 "], [GREY, "BOLL(26,2)"],
      ["#2e90c8", "MID:0"], ["#c8284a", "UPPER:0"], ["#fff", "LOWER:0 "], [GREY, "SSLO"], [GREY, "4166 "], [GREY, "WAVE(5)"], ["#e000e0", "WAVE:4304"],
    ];
    const axis: [number, string][] = [[377, "3000"], [437, "2500"], [497, "2000"], [557, "1500"]];
    return html`
      <section class="pane fill">
        <div class="axis">
          <svg width="58" height="545">${axis.map(([y, t]) => svg`<text x="57" y=${y - 68 + 5}>${t}</text>`)}</svg>
          <div class="info">
            <p>20100831</p>
            <dl>${CURSOR.map(([k, v, c]) => html`<dt>${[...k].map((ch) => html`<span>${ch}</span>`)}</dt><dd class=${c}>${v}</dd>`)}</dl>
          </div>
        </div>
        <div class="plot">
          ${this.legend(tags)}
          <svg>
            <g transform="translate(${-LEFT},-68)">${this.mainPlot()}</g>
            <svg x="100%" style="overflow:visible">
              ${PROFILE.map(([y, w]) => svg`<rect x=${-w} y=${y - 68} width=${w} height="10" fill="#ff0" fill-opacity=".285"></rect>`)}
            </svg>
          </svg>
        </div>
      </section>`;
  }

  private toolbar() {
    return html`
      <div class="tools" role="toolbar">
        ${ICONS.map(([n, i]) => n === "|" ? html`<span class="sep"></span>` : html`<button class="tool" aria-label=${n}><svg width="16" height="16" viewBox="0 0 16 16">${i}</svg></button>`)}
        ${PERIODS.map(([t, c]) => t === "|"
          ? html`<span class="sep"></span>`
          : html`<button class="tool period ${c} ${t.length > 2 ? "small" : ""} ${t === this.period ? "on" : ""}" @click=${() => (this.period = t)}>${t}</button>`)}
      </div>`;
  }

  private book(rows: (string | number)[][]) {
    return html`<table class="book">
      <colgroup><col class="c-l" /><col class="c-p" /><col /></colgroup>
      <tbody>${rows.map(([n, p, v]) => html`<tr class=${String(n)[1] === "一" ? "big" : ""}><th>${n}</th><td class="g">${p}</td><td class="y">${v}</td></tr>`)}</tbody>
    </table>`;
  }

  private quote() {
    return html`
      <aside class="quote">
        <div class="title">螺纹2010(rb2010)
          <button aria-label="窗口"><svg width="16" height="15"><path d="M.5.5h15v14H.5zM3.500 3.500h9v8h-9zM3.500 4.500h9" fill="none" stroke="#7db9ff"/></svg></button>
        </div>
        <div class="ratio"><i></i><i></i></div>
        ${this.book(ASKS)}${this.book(BIDS)}
        <table class="stats">
          <colgroup><col class="c-l" /><col class="c-p" /><col class="c-m" /><col /></colgroup>
          <tbody>${STATS.map(([a, b, c, d, e, f]) => html`<tr><th>${a}</th><td class=${c}>${b}</td><th>${d}</th><td class=${f}>${e}</td></tr>`)}</tbody>
        </table>
        <table class="ticks">
          <colgroup><col class="c-time" /><col class="c-price" /><col class="c-vol" /><col class="c-diff" /><col /></colgroup>
          <thead><tr><th>北京</th><th>价格</th><th>✓大单</th><th>仓差</th><th>性质</th></tr></thead>
          <tbody>${TICKS.map(([t, p, v, d, k, c]) => html`<tr>
            <td class=${t[0] === ":" ? "sec" : ""}>${t}</td><td class="g">${p}</td><td class=${c}>${v}</td><td class="y">${d}</td><td class="kind ${c}">${k}</td>
          </tr>`)}</tbody>
        </table>
        <div class="bottom">笔<i></i></div>
      </aside>`;
  }

  render() {
    return html`
      <header class="menu">
        <nav class="items">${MENU.map((m) => html`<a href="#" class=${m === "特色功能" ? "hot" : ""}>${m}</a>`)}</nav>
        <div class="name">博易云-中辉期货</div>
        <div class="actions">
          <button class="action"><svg width="12" height="16"><path d="M8 0 1 9h4l-2 7 8-10H7z" fill="#f5a01c"/></svg>交易</button>
          <button class="action"><svg width="14" height="14"><circle cx="7" cy="5" r="4" fill="#999"/><path d="M0 14c1-6 13-6 14 0z" fill="#999"/></svg>论坛</button>
        </div>
      </header>
      ${this.toolbar()}
      <div class="brand">
        <svg width="32" height="30" viewBox="0 0 32 30">
          <rect width="32" height="30" rx="4" fill="#e8591a"/>
          <circle cx="16" cy="15" r="11.500" fill="none" stroke="#fff" stroke-width="2"/>
          <path d="M8 10c4 0 6-1 8-4 2 3 4 4 8 4M11 12h10M16 12v11M7 17h18M11 23h10" fill="none" stroke="#fff" stroke-width="2.200"/>
        </svg>
        <div><div class="brand-name">5e<b>天资</b></div><div class="brand-url">5etz.com</div></div>
      </div>
      <div class="body">
        <nav class="side">${SIDE.map((s, i) => html`<button class="tab ${i ? "" : "cur"}">${[...s].map((c) => html`<span>${c}</span>`)}${i ? nothing : html`<svg width="6" height="10"><path d="M1 1v8l4-4z" fill="#fff"/></svg>`}</button>`)}</nav>
        <main class="chart">
          <div class="head">
            <span>螺纹2010(010610)&lt;月线&gt;</span>
            <a href="#">商品叠加</a><a href="#">周期</a>
            <div class="navs">
              ${["M2.500 7.500 6.500 4v2h6v3h-6v2z", "M13.500 7.500 9.500 4v2h-6v3h6v2z", "M0 9.500h10M10.500 0v15M13.500 2v2M13.500 6v2M13.500 10v2"].map(
                (d, i) => html`<button aria-label=${["上一个", "下一个", "布局"][i]}><svg width="16" height="15"><path d="M.5.5h15v14H.5z" fill="none" stroke="#7db9ff"/><path d=${d} fill="none" stroke="#7db9ff"/></svg></button>`
              )}
            </div>
          </div>
          ${this.mainPane()}
          ${this.pane(614, 102, [[664, "8000万"]], [[GREY, "VOL(5,10)"], [GREY, "VOLUME:575461.0000"], ["#fff", "MAVOL1:14449088.0000"], ["#ff0", "MAVOL2:9455005.8000"]], this.volumePlot())}
          ${this.pane(717, 72, [[767, "0"]], [[GREY, "LON(10)"], [GREY, "LON:-398.0921"], ["#fff", "-398.0921"], ["#ff0", "MA1:-25.8299"]],
            svg`${grid(767, "#e02020")}${sticks(LON, 767)}${line(LON, "#fff")}${line(LON_MA, "#ff0")}`)}
          ${this.pane(790, 87, [[856, "0"]], [[GREY, "SHORT(10)"], [GREY, "SHORT:-108.7181"], ["#fff", "-108.7181"], ["#ff0", "MA1:-45.8036"]],
            svg`${grid(856, "#e02020")}${sticks(SHORT, 856)}${line(SHORT, "#eee")}${line(SHORT_MA, "#ff0")}`)}
          ${this.pane(878, 65, [[904, "0.8"]], [[GREY, "QHLSR"], ["#fff", "QHL5:0.4029"], ["#ff0", "QHL10:0.0250"]],
            svg`${grid(904)}${line(QHL5, "#eee")}${line(QHL10, "#e8e800")}`)}
          ${this.pane(944, 78, [[964, "80"]], [[GREY, "PSY(12,6)"], ["#fff", "PSY:58.3333"], ["#ff0", "PSYMA:58.3333"]],
            svg`${grid(964)}${grid(969, "#fff")}${grid(1019, "#fff")}${line(PSY, "#eee")}${line(PSYMA, "#f0f000")}`, true)}
          <div class="foot">
            <div class="axis">月线</div>
            <div class="plot dates"><svg><g transform="translate(${-LEFT},-1023)">${DATES.map(([x, t]) => svg`<text x=${x} y="1034">${t}</text>`)}</g></svg></div>
          </div>
        </main>
        ${this.quote()}
        <div class="strip"><div class="tip">点击<br />在弹<br />指定</div></div>
      </div>`;
  }
}
